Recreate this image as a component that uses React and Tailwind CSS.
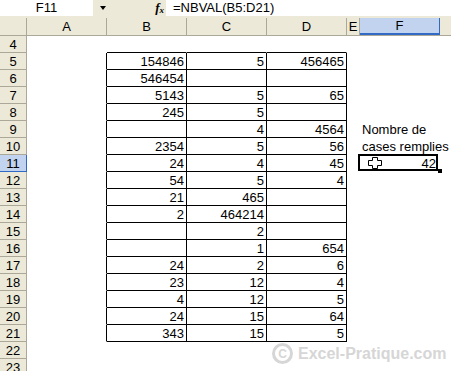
import React from 'react';

const data = {
  5: ['154846', '5', '456465'],
  6: ['546454', '', ''],
  7: ['5143', '5', '65'],
  8: ['245', '5', ''],
  9: ['', '4', '4564'],
  10: ['2354', '5', '56'],
  11: ['24', '4', '45'],
  12: ['54', '5', '4'],
  13: ['21', '465', ''],
  14: ['2', '464214', ''],
  15: ['', '2', ''],
  16: ['', '1', '654'],
  17: ['24', '2', '6'],
  18: ['23', '12', '4'],
  19: ['4', '12', '5'],
  20: ['24', '15', '64'],
  21: ['343', '15', '5'],
};

const rows = [4, 5, 6, 7, 8, 9, 10, 11, 12, 13, 14, 15, 16, 17, 18, 19, 20, 21, 22, 23];

function CrossCursor() {
  return (
    <svg width="14" height="12" viewBox="0 0 14 12" className="absolute left-[8px] top-[2px]">
      <polygon
        points="4.5,0.5 9.5,0.5 9.5,3.5 13.5,3.5 13.5,8.5 9.5,8.5 9.5,11.5 4.5,11.5 4.5,8.5 0.5,8.5 0.5,3.5 4.5,3.5"
        fill="white"
        stroke="black"
        strokeWidth="1"
      />
    </svg>
  );
}

function Row({ r }) {
  const inTable = r >= 5 && r <= 21;
  const sel = r === 11;
  const vals = data[r] || ['', '', ''];
  const tableCell = 'w-[80px] shrink-0 border-r border-b border-black flex justify-end pr-[2px] pt-[2px] leading-[14px]';
  const topCell = r === 4
    ? 'w-[80px] shrink-0 border-r border-b border-r-white border-b-black'
    : 'w-[80px] shrink-0 border-r border-b border-white';

  return (
    <div className="flex h-[17px]">
      <div
        className={
          sel
            ? 'w-[27px] shrink-0 bg-[#c1d3ef] border-r border-b border-r-[#316ac5] border-b-[#316ac5] text-center leading-[16px] pt-[1px]'
            : 'w-[27px] shrink-0 bg-[#ece9d8] border-r border-b border-[#aca899] text-center leading-[16px] pt-[1px]'
        }
      >
        {r}
      </div>
      <div
        className={
          inTable
            ? 'w-[80px] shrink-0 border-r border-b border-r-black border-b-white'
            : 'w-[80px] shrink-0 border-r border-b border-white'
        }
      />
      {inTable ? (
        <>
          <div className={tableCell}>{vals[0]}</div>
          <div className={tableCell}>{vals[1]}</div>
          <div className={tableCell}>{vals[2]}</div>
        </>
      ) : (
        <>
          <div className={topCell} />
          <div className={topCell} />
          <div className={topCell} />
        </>
      )}
      <div className="w-[13px] shrink-0" />
      <div className="w-[80px] shrink-0 relative whitespace-nowrap pl-[2px] pt-[2px] leading-[14px]">
        {r === 9 && 'Nombre de'}
        {r === 10 && 'cases remplies'}
        {sel && (
          <>
            <div className="absolute left-[-2px] top-[-1px] w-[80px] h-[17px] border-2 border-black" />
            <div className="absolute right-[-2px] bottom-[-1px] w-[4px] h-[4px] bg-black" />
            <CrossCursor />
            <div className="text-right pr-[4px]">42</div>
          </>
        )}
      </div>
      <div className="flex-1" />
    </div>
  );
}

export default function App() {
  const headers = [
    { label: 'A', w: 'w-[80px]' },
    { label: 'B', w: 'w-[80px]' },
    { label: 'C', w: 'w-[80px]' },
    { label: 'D', w: 'w-[80px]' },
    { label: 'E', w: 'w-[13px]' },
  ];

  return (
    <div className="relative w-[451px] h-[371px] overflow-hidden bg-white text-black text-[13px] font-['Liberation_Sans',Arial,sans-serif]">
      {/* Formula bar */}
      <div className="flex h-[18px] bg-[#ece9d8]">
        <div className="w-[93px] h-[16px] bg-white text-center leading-[16px]">F11</div>
        <div className="w-[20px] h-[16px] flex items-center justify-center">
          <div className="w-0 h-0 border-l-[3px] border-r-[3px] border-t-[4px] border-l-transparent border-r-transparent border-t-black" />
        </div>
        <div className="w-[53px] h-[16px] flex items-center justify-end pr-[2px] leading-[16px]">
          <span className="italic font-bold font-['Liberation_Serif',serif] text-[13px]">f</span>
          <span className="italic font-bold font-['Liberation_Serif',serif] text-[9px] mt-[3px]">x</span>
        </div>
        <div className="flex-1 h-[16px] bg-white pl-[7px] leading-[16px]">=NBVAL(B5:D21)</div>
      </div>

      {/* Column headers */}
      <div className="flex h-[18px] bg-[#ece9d8] border-b border-[#aca899]">
        <div className="w-[27px] shrink-0 border-r border-[#aca899]" />
        {headers.map((h) => (
          <div key={h.label} className={`${h.w} shrink-0 border-r border-[#aca899] text-center leading-[17px]`}>
            {h.label}
          </div>
        ))}
        <div className="w-[80px] shrink-0 bg-[#c1d3ef] border-r border-b-2 border-r-[#316ac5] border-b-[#316ac5] text-center leading-[16px]">
          F
        </div>
        <div className="flex-1" />
      </div>

      {/* Rows */}
      {rows.map((r) => (
        <Row key={r} r={r} />
      ))}

      {/* Watermark */}
      <div className="absolute left-[272px] top-[343px] flex items-center gap-[5px] text-[#d6d6d6] font-bold">
        <div className="w-[21px] h-[21px] rounded-full border-[3px] border-[#d6d6d6] flex items-center justify-center text-[12px] leading-none">
          C
        </div>
        <span className="text-[16px] leading-[20px]">Excel-Pratique.com</span>
      </div>
    </div>
  );
}
